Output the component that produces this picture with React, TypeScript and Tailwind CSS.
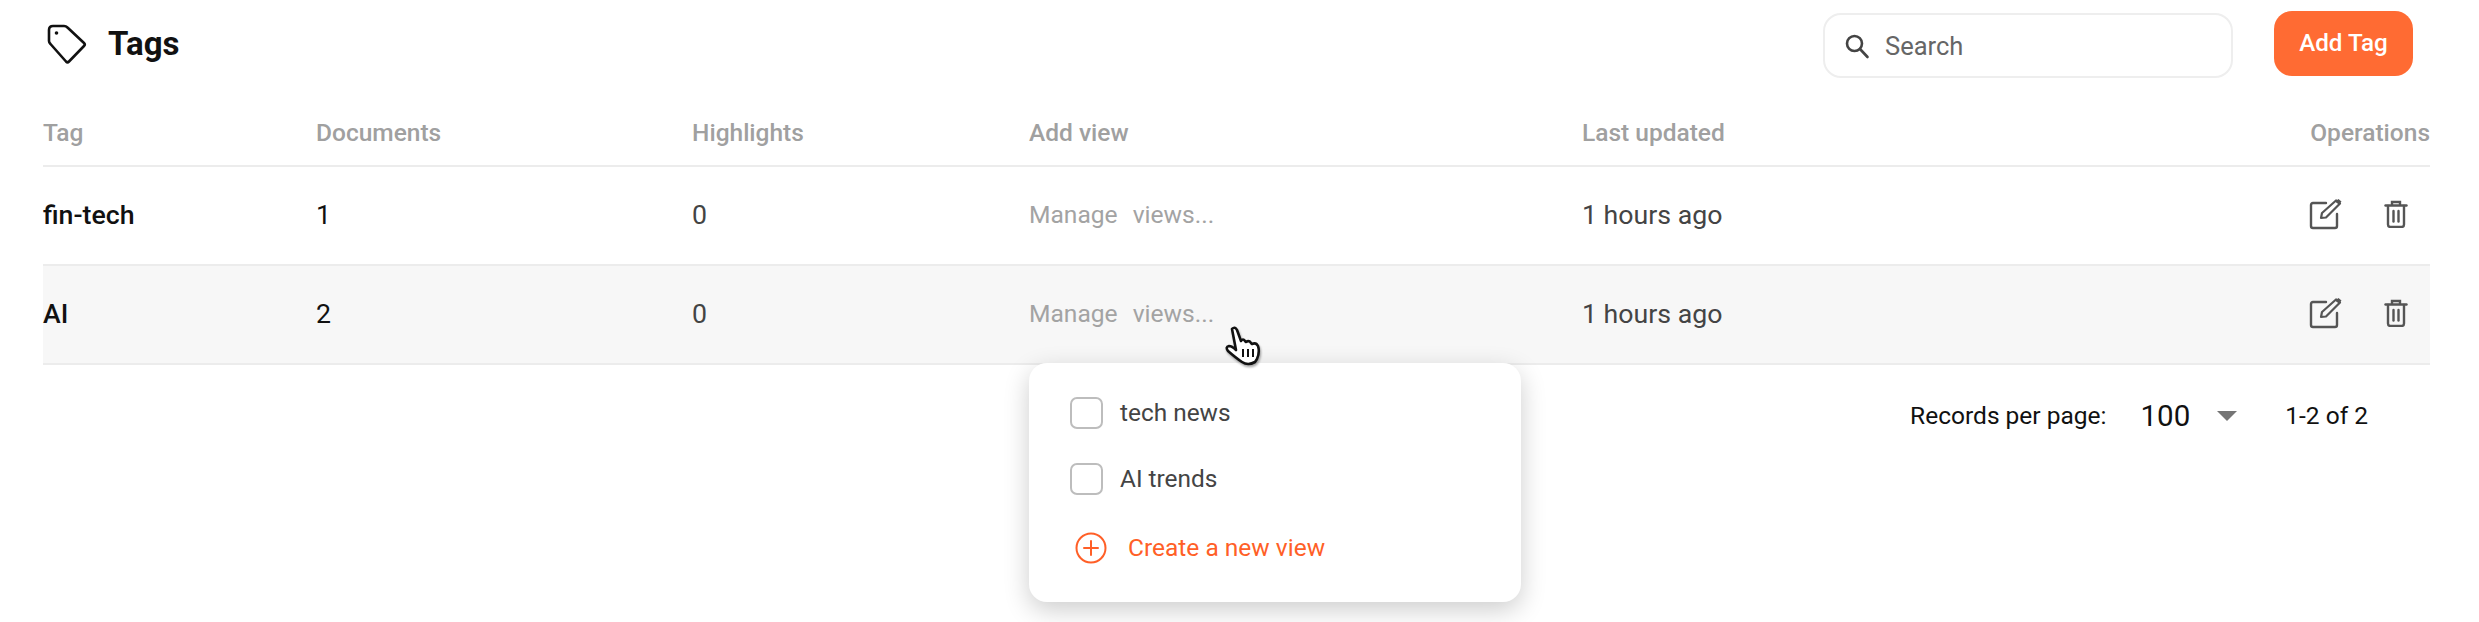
import React from 'react';

const rows = [
  { tag: 'fin-tech', documents: '1', highlights: '0', updated: '1 hours ago', hovered: false },
  { tag: 'AI', documents: '2', highlights: '0', updated: '1 hours ago', hovered: true },
];

const TagIcon = () => (
  <svg width="42" height="42" viewBox="0 0 42 42" fill="none" stroke="#111" strokeWidth="2.6" strokeLinejoin="round">
    <path d="M3 7 Q3 3 7 3 L18 3 Q20 3 21.5 4.5 L38 20 Q39.5 21.5 38 23 L23 38.5 Q21.5 40 20 38.5 L4.5 21 Q3 19.5 3 18 Z" />
    <circle cx="10.5" cy="10" r="1.8" fill="#111" stroke="none" />
  </svg>
);

const SearchIcon = () => (
  <svg width="26" height="26" viewBox="0 0 26 26" fill="none" stroke="#444" strokeWidth="2.6" strokeLinecap="round" className="shrink-0">
    <circle cx="10.5" cy="10.5" r="7.5" />
    <path d="M16 16 L23.5 24" />
  </svg>
);

const EditIcon = () => (
  <svg width="34" height="32" viewBox="0 0 34 32" fill="none" className="shrink-0">
    <path d="M17 5 H4 Q2 5 2 7 V28 Q2 30 4 30 H26 Q28 30 28 28 V16" stroke="#555" strokeWidth="2.4" strokeLinecap="round" />
    <path d="M12 20 L13 15 L27 2.5 L31 5.5 L17 19.5 Z" stroke="#555" strokeWidth="2.2" strokeLinejoin="round" />
    <path d="M26 3.5 L29.5 1 L32.5 3.5 L30 6.5 Z" fill="#555" />
  </svg>
);

const TrashIcon = () => (
  <svg width="24" height="28" viewBox="0 0 24 28" fill="none" stroke="#555" strokeWidth="2.4" strokeLinecap="round" className="shrink-0">
    <path d="M1.5 5.5 H22.5" />
    <path d="M8 4.5 V2 H16 V4.5" />
    <path d="M4 6 V24.5 Q4 27 6.5 27 H17.5 Q20 27 20 24.5 V6" />
    <path d="M9.5 11 V21.5" />
    <path d="M14.5 11 V21.5" />
  </svg>
);

const PlusCircleIcon = () => (
  <svg width="32" height="32" viewBox="0 0 32 32" fill="none" stroke="#ff5f27" strokeWidth="2" strokeLinecap="round" className="shrink-0">
    <circle cx="16" cy="16" r="14.5" />
    <path d="M16 9 V23" />
    <path d="M9 16 H23" />
  </svg>
);

const HandCursor = () => (
  <svg
    width="40"
    height="42"
    viewBox="0 0 40 42"
    className="absolute left-[1224px] top-[326px] drop-shadow-[1px_2px_1px_rgba(0,0,0,0.35)]"
  >
    <path
      d="M8 3 Q11 0 13 4 L17 15 Q19 12 21 15 L22 16 Q25 14 27 17 L28 18 Q32 16 34 20 Q36 26 33 33 L31 36 Q24 40 18 36 Q12 32 4 25 Q1 21 5 20 Q8 20 12 24 Z"
      fill="#fff"
      stroke="#111"
      strokeWidth="2.6"
      strokeLinejoin="round"
    />
    <path d="M19 23 V31 M24 23 V31 M29 23 V31" stroke="#111" strokeWidth="2" fill="none" />
  </svg>
);

function Checkbox({ label }: { label: string }) {
  return (
    <label className="flex items-center gap-[17px] h-[32px] text-[24.4px] text-[#444]">
      <span className="w-[33px] h-[32px] rounded-[7px] border-2 border-[#bdbdbd] bg-white" />
      {label}
    </label>
  );
}

export default function App() {
  return (
    <div className="relative w-[2479px] h-[622px] bg-white overflow-hidden font-['Roboto',sans-serif] text-[24.5px]">
      {/* Header */}
      <div className="flex items-start justify-between pl-[46px] pr-[66px] h-[106px]">
        <div className="flex items-center gap-[20px] pt-[23px]">
          <TagIcon />
          <h1 className="text-[33px] leading-[42px] font-bold text-[#111]">Tags</h1>
        </div>
        <div className="flex items-start gap-[41px] pt-[11px]">
          <div className="flex items-center gap-[15px] w-[410px] h-[65px] mt-[2px] pl-[19px] rounded-[18px] border-2 border-[#eeeeee] bg-white">
            <SearchIcon />
            <span className="text-[25.5px] text-[#666] pt-[2px]">Search</span>
          </div>
          <button className="w-[139px] h-[65px] rounded-[18px] bg-[#ff6b33] text-white font-medium text-[24.2px]">Add Tag</button>
        </div>
      </div>

      {/* Table */}
      <div className="ml-[43px] w-[2387px]">
        <div className="grid grid-cols-[273px_376px_337px_553px_1fr] items-center h-[61px] pb-[4px] border-b-2 border-[#ececec] text-[#a0a0a0] font-medium">
          <div>Tag</div>
          <div>Documents</div>
          <div>Highlights</div>
          <div>Add view</div>
          <div className="flex justify-between">
            <span>Last updated</span>
            <span>Operations</span>
          </div>
        </div>
        {rows.map((row) => (
          <div
            key={row.tag}
            className={`grid grid-cols-[273px_376px_337px_553px_1fr] items-center h-[99px] border-b-2 border-[#ececec] ${row.hovered ? 'bg-[#f7f7f7]' : 'bg-white'}`}
          >
            <div className="text-[26.7px] font-medium text-[#111]">{row.tag}</div>
            <div className="text-[26.7px] text-[#111]">{row.documents}</div>
            <div className="text-[26.7px] text-[#444]">{row.highlights}</div>
            <div className="flex gap-[15px] text-[24.6px] text-[#a3a3a3]">
              <span>Manage</span>
              <span>views...</span>
            </div>
            <div className="flex items-center justify-between text-[26.7px] text-[#444]">
              <span>{row.updated}</span>
              <div className="flex items-center gap-[41px] pr-[22px] pb-[3px]">
                <EditIcon />
                <TrashIcon />
              </div>
            </div>
          </div>
        ))}
      </div>

      {/* Pagination */}
      <div className="flex items-center justify-end h-[100px] mt-[1px] pr-[111px] text-[#111]">
        <span>Records per page:</span>
        <span className="ml-[34px] text-[29.5px]">100</span>
        <span className="ml-[27px] w-0 h-0 border-x-[10px] border-x-transparent border-t-[10px] border-t-[#757575]" />
        <span className="ml-[48px]">1-2 of 2</span>
      </div>

      {/* Views dropdown */}
      <div className="absolute left-[1029px] top-[363px] w-[492px] h-[239px] rounded-[18px] bg-white shadow-[0_8px_26px_rgba(0,0,0,0.2)] pt-[34px] pl-[41px]">
        <div className="flex flex-col gap-[34px]">
          <Checkbox label="tech news" />
          <Checkbox label="AI trends" />
        </div>
        <div className="flex items-center gap-[21px] mt-[35px] ml-[5px] text-[#ff5f27]">
          <PlusCircleIcon />
          Create a new view
        </div>
      </div>

      <HandCursor />
    </div>
  );
}
